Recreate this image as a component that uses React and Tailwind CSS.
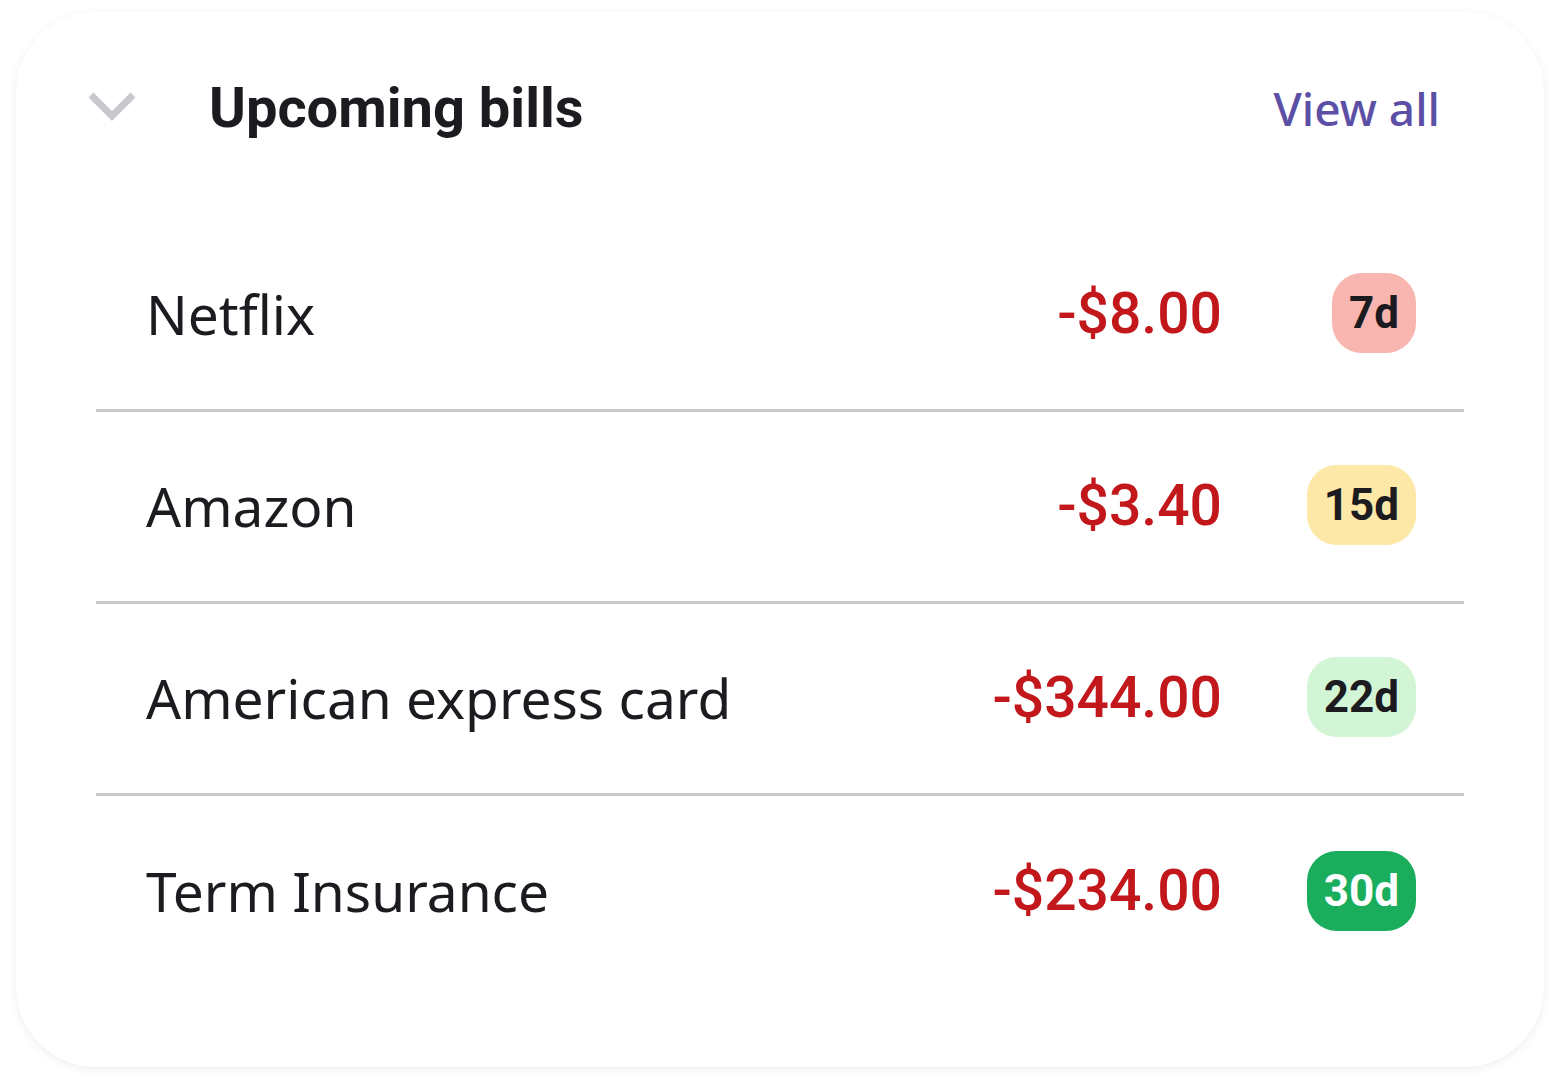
import React from 'react';

const bills = [
  { name: 'Netflix', amount: '-$8.00', days: '7d', badge: 'bg-[#f9b5af] text-[#1c1b1f]' },
  { name: 'Amazon', amount: '-$3.40', days: '15d', badge: 'bg-[#fde8a8] text-[#1c1b1f]' },
  { name: 'American express card', amount: '-$344.00', days: '22d', badge: 'bg-[#d2f5d5] text-[#1c1b1f]' },
  { name: 'Term Insurance', amount: '-$234.00', days: '30d', badge: 'bg-[#19ad5c] text-white' },
];

function App() {
  return (
    <div className="w-[1560px] h-[1088px] bg-white pt-[12px] pl-[16px]">
      <div className="w-[1528px] h-[1055px] bg-white rounded-[80px] shadow-[0_2px_10px_rgba(0,0,0,0.07)] pt-[48px]">
        {/* header */}
        <div className="h-[96px] flex items-center pl-[72px] pr-[104px]">
          <svg width="48" height="30" viewBox="0 0 48 30" className="shrink-0 -mt-[4px]">
            <path d="M3 4 L24 25 L45 4" fill="none" stroke="#c9c7cd" strokeWidth="7" />
          </svg>
          <h2 className="ml-[73px] text-[56px] font-bold text-[#1c1b1f] font-['Roboto',sans-serif] leading-none">
            Upcoming bills
          </h2>
          <a className="ml-auto text-[46px] font-medium text-[#5c50a6] font-['Noto_Sans',sans-serif] leading-none">
            View all
          </a>
        </div>

        {/* list */}
        <div className="mx-[80px] mt-[64px]">
          {bills.map((b, i) => (
            <div
              key={b.name}
              className={
                'h-[192px] flex items-center pl-[50px] pr-[48px] ' +
                (i < bills.length - 1 ? 'border-b-[3px] border-[#c8c8c8] pb-[3px]' : 'pb-[3px]')
              }
            >
              <span className="flex-1 text-[55px] text-[#1c1b1f] font-['Noto_Sans',sans-serif] leading-none">
                {b.name}
              </span>
              <span className="text-[57px] font-medium text-[#c2171b] font-['Roboto',sans-serif] leading-none text-right">
                {b.amount}
              </span>
              <div className="w-[112px] ml-[82px] flex justify-end">
                <span
                  className={
                    'h-[80px] px-[17px] rounded-[30px] flex items-center justify-center text-[44px] font-bold font-["Roboto",sans-serif] ' +
                    b.badge
                  }
                >
                  {b.days}
                </span>
              </div>
            </div>
          ))}
        </div>
      </div>
    </div>
  );
}

export default App;
